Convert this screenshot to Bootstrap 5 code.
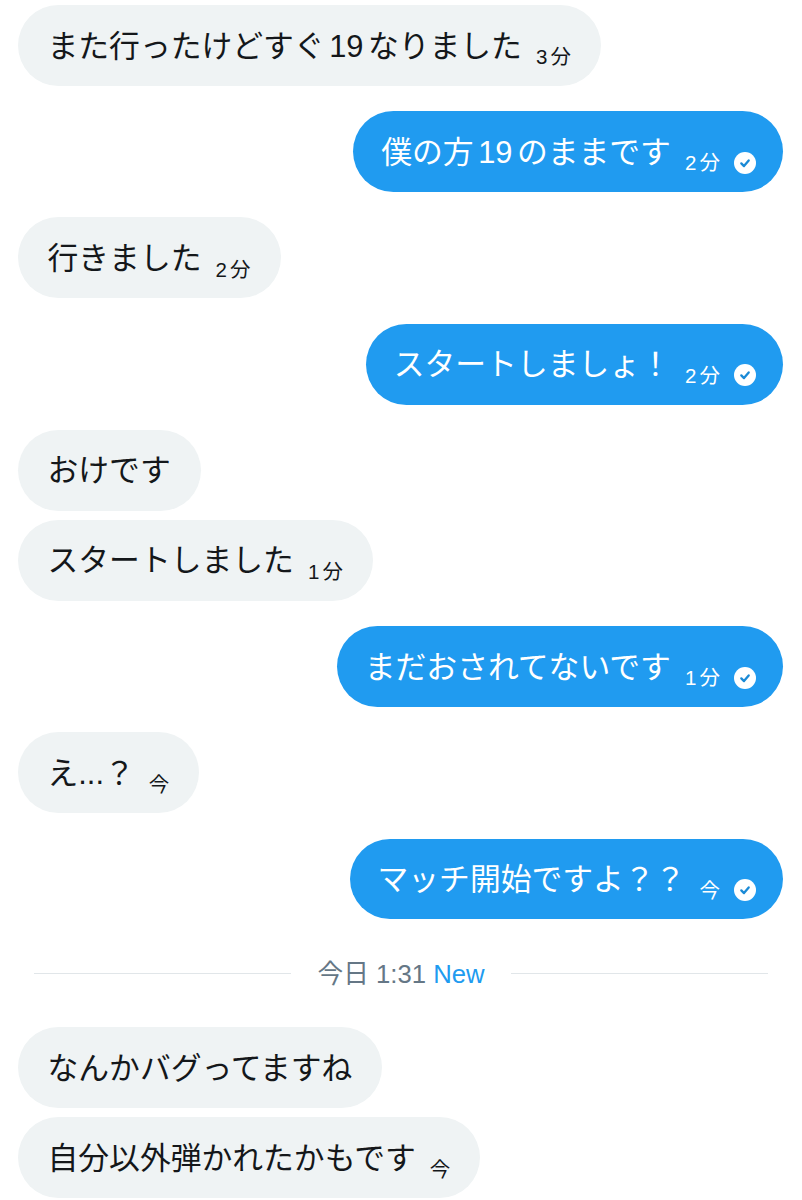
<!DOCTYPE html>
<html lang="ja">
<head>
    <meta charset="UTF-8">
    <title>メッセージ</title>
    <link href="https://cdn.jsdelivr.net/npm/bootstrap@5.3.3/dist/css/bootstrap.min.css" rel="stylesheet">
    <style>
        body {
            font-family: "Liberation Sans", "Noto Sans CJK JP", sans-serif;
            background: #fff;
        }
        .chat-wrap { padding: 5px 19px 0 18px; }
        .bubble {
            height: 80.8px;
            border-radius: 40.4px;
            padding: 0 30px 0 29.5px;
            font-size: 30.8px;
            line-height: 1;
            white-space: nowrap;
        }
        .bubble-in { background: #eff3f4; color: #14171a; }
        .bubble-out { background: #209bf0; color: #fff; padding-left: 28px; }
        .msg-gap { margin-top: 25.45px; }
        .msg-near { margin-top: 9.2px; }
        .msg-text { padding-top: 3px; }
        .digits { margin: 0 4.5px; }
        .stamp { font-size: 20.5px; letter-spacing: 3.2px; margin-left: 14px; margin-right: -3.2px; padding-top: 24px; }
        .check-icon { width: 22px; height: 22px; margin-left: 14px; margin-top: 22px; margin-right: -3px; flex: none; }
        .day-line { margin: 41px 15px 41px 16px; gap: 26px; height: 26px; }
        .day-rule { height: 1px; background: #e1e6e9; }
        .day-label { font-size: 25.7px; color: #657786; white-space: nowrap; padding-top: 1px; }
        .day-new { color: #209bf0; }
    </style>
</head>
<body>
    <div class="chat-wrap d-flex flex-column">
        <div class="d-flex justify-content-start">
            <div class="bubble bubble-in d-flex align-items-center">
                <span class="msg-text">また行ったけどすぐ<span class="digits">19</span>なりました</span><span class="stamp">3分</span>
            </div>
        </div>
        <div class="d-flex justify-content-end msg-gap">
            <div class="bubble bubble-out d-flex align-items-center">
                <span class="msg-text">僕の方<span class="digits">19</span>のままです</span><span class="stamp">2分</span>
                <svg class="check-icon" viewBox="0 0 22 22"><circle cx="11" cy="11" r="11" fill="#fff"/><path d="M7.3 11.4l2.7 2.7 4.7-5.6" fill="none" stroke="#1a8ad6" stroke-width="2.3" stroke-linecap="round" stroke-linejoin="round"/></svg>
            </div>
        </div>
        <div class="d-flex justify-content-start msg-gap">
            <div class="bubble bubble-in d-flex align-items-center">
                <span class="msg-text">行きました</span><span class="stamp">2分</span>
            </div>
        </div>
        <div class="d-flex justify-content-end msg-gap">
            <div class="bubble bubble-out d-flex align-items-center">
                <span class="msg-text">スタートしましょ！</span><span class="stamp">2分</span>
                <svg class="check-icon" viewBox="0 0 22 22"><circle cx="11" cy="11" r="11" fill="#fff"/><path d="M7.3 11.4l2.7 2.7 4.7-5.6" fill="none" stroke="#1a8ad6" stroke-width="2.3" stroke-linecap="round" stroke-linejoin="round"/></svg>
            </div>
        </div>
        <div class="d-flex justify-content-start msg-gap">
            <div class="bubble bubble-in d-flex align-items-center">
                <span class="msg-text">おけです</span>
            </div>
        </div>
        <div class="d-flex justify-content-start msg-near">
            <div class="bubble bubble-in d-flex align-items-center">
                <span class="msg-text">スタートしました</span><span class="stamp">1分</span>
            </div>
        </div>
        <div class="d-flex justify-content-end msg-gap">
            <div class="bubble bubble-out d-flex align-items-center">
                <span class="msg-text">まだおされてないです</span><span class="stamp">1分</span>
                <svg class="check-icon" viewBox="0 0 22 22"><circle cx="11" cy="11" r="11" fill="#fff"/><path d="M7.3 11.4l2.7 2.7 4.7-5.6" fill="none" stroke="#1a8ad6" stroke-width="2.3" stroke-linecap="round" stroke-linejoin="round"/></svg>
            </div>
        </div>
        <div class="d-flex justify-content-start msg-gap">
            <div class="bubble bubble-in d-flex align-items-center">
                <span class="msg-text">え...？</span><span class="stamp">今</span>
            </div>
        </div>
        <div class="d-flex justify-content-end msg-gap">
            <div class="bubble bubble-out d-flex align-items-center">
                <span class="msg-text">マッチ開始ですよ？？</span><span class="stamp">今</span>
                <svg class="check-icon" viewBox="0 0 22 22"><circle cx="11" cy="11" r="11" fill="#fff"/><path d="M7.3 11.4l2.7 2.7 4.7-5.6" fill="none" stroke="#1a8ad6" stroke-width="2.3" stroke-linecap="round" stroke-linejoin="round"/></svg>
            </div>
        </div>
        <div class="day-line d-flex align-items-center">
            <div class="day-rule flex-grow-1"></div>
            <div class="day-label">今日 1:31 <span class="day-new">New</span></div>
            <div class="day-rule flex-grow-1"></div>
        </div>
        <div class="d-flex justify-content-start">
            <div class="bubble bubble-in d-flex align-items-center">
                <span class="msg-text">なんかバグってますね</span>
            </div>
        </div>
        <div class="d-flex justify-content-start msg-near">
            <div class="bubble bubble-in d-flex align-items-center">
                <span class="msg-text">自分以外弾かれたかもです</span><span class="stamp">今</span>
            </div>
        </div>
    </div>
    <script src="https://cdn.jsdelivr.net/npm/bootstrap@5.3.3/dist/js/bootstrap.bundle.min.js"></script>
</body>
</html>
